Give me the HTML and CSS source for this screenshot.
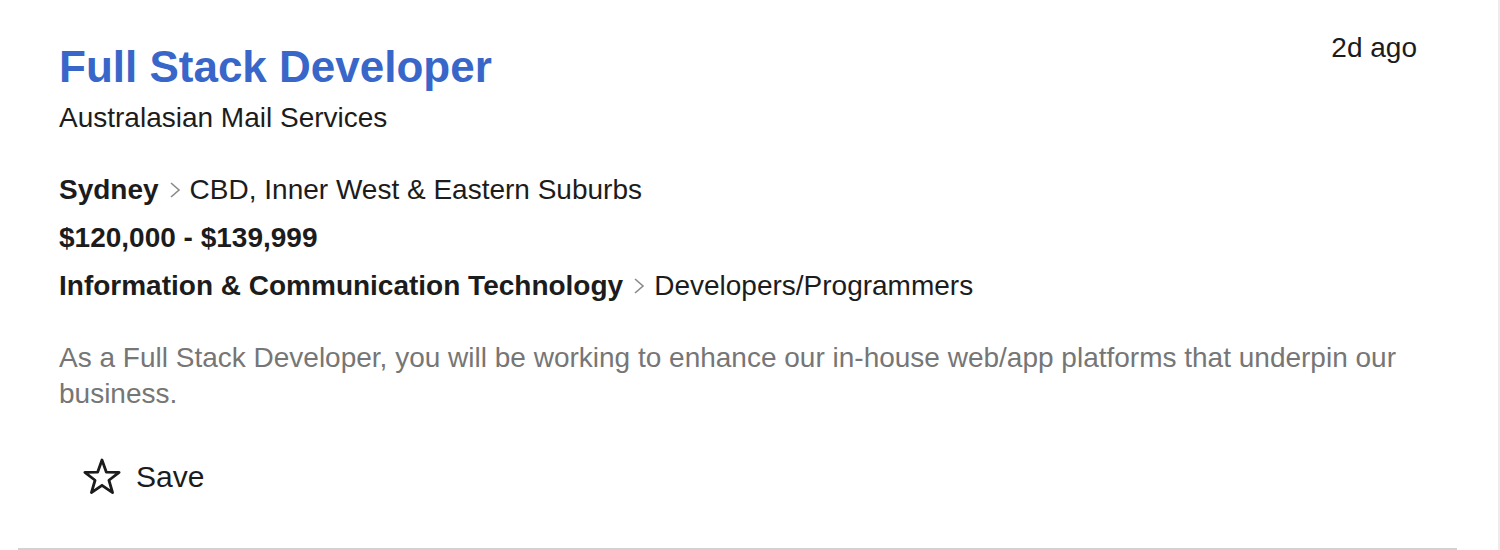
FILE: index.html
```html
<!DOCTYPE html>
<html lang="en">
<head>
<meta charset="utf-8">
<title>Full Stack Developer</title>
<link rel="stylesheet" href="styles.css">
</head>
<body>
<div class="page">
  <article class="card">
    <div class="head">
      <div class="head-main">
        <h1 class="title">Full Stack Developer</h1>
        <div class="company">Australasian Mail Services</div>
      </div>
      <div class="time">2d ago</div>
    </div>
    <ul class="meta">
      <li class="meta-row"><strong>Sydney</strong><svg class="chev" width="12" height="18" viewBox="0 0 12 18"><polyline points="2,2 10,9 2,16" fill="none" stroke="#8a8a8a" stroke-width="1.6"/></svg><span>CBD, Inner West &amp; Eastern Suburbs</span></li>
      <li class="meta-row"><strong>$120,000 - $139,999</strong></li>
      <li class="meta-row"><strong>Information &amp; Communication Technology</strong><svg class="chev" width="12" height="18" viewBox="0 0 12 18"><polyline points="2,2 10,9 2,16" fill="none" stroke="#8a8a8a" stroke-width="1.6"/></svg><span>Developers/Programmers</span></li>
    </ul>
    <p class="desc">As a Full Stack Developer, you will be working to enhance our in-house web/app platforms that underpin our business.</p>
    <button class="save" type="button">
      <svg class="star" width="40" height="40" viewBox="0 0 40 40"><path d="M20 3 L24.29 15.09 L37.12 15.44 L26.94 23.26 L30.58 35.56 L20 28.3 L9.42 35.56 L13.06 23.26 L2.88 15.44 L15.71 15.09 Z" fill="none" stroke="#1c1c1c" stroke-width="2.8" stroke-linejoin="round"/></svg>
      <span>Save</span>
    </button>
  </article>
</div>
</body>
</html>
```

FILE: styles.css
```css
* { box-sizing: border-box; }
html, body { margin: 0; padding: 0; background: #fff; }
body {
  font-family: "Liberation Sans", Arial, Helvetica, sans-serif;
  color: #1c1c1c;
}
.page {
  width: 1500px;
  min-height: 550px;
  border-right: 2px solid #ececec;
}
.card {
  margin-left: 18px;
  width: 1439px;
  padding: 30px 40px 51px 41px;
  border-bottom: 2px solid #d2d2d2;
}
.head {
  display: flex;
  justify-content: space-between;
  align-items: flex-start;
}
.title {
  margin: 11px 0 0;
  font-size: 44px;
  line-height: 52px;
  font-weight: bold;
  color: #3866c9;
}
.company {
  margin-top: 7px;
  font-size: 28px;
  line-height: 36px;
}
.time {
  font-size: 28px;
  line-height: 36px;
}
.meta {
  list-style: none;
  margin: 30px 0 0;
  padding: 0;
}
.meta-row {
  display: flex;
  align-items: center;
  font-size: 28px;
  line-height: 48px;
  height: 48px;
}
.meta-row strong { font-weight: bold; }
.chev {
  margin: 0 9px 0 10px;
  flex: none;
}
.desc {
  margin: 30px 0 0;
  font-size: 28px;
  line-height: 36px;
  color: #767676;
  max-width: 1358px;
}
.save {
  margin-top: 45px;
  display: flex;
  align-items: center;
  gap: 14px;
  padding: 0 0 0 23px;
  border: 0;
  background: none;
  font: inherit;
  font-size: 30px;
  line-height: 36px;
  color: #1c1c1c;
  cursor: pointer;
}
.star { flex: none; }
```
